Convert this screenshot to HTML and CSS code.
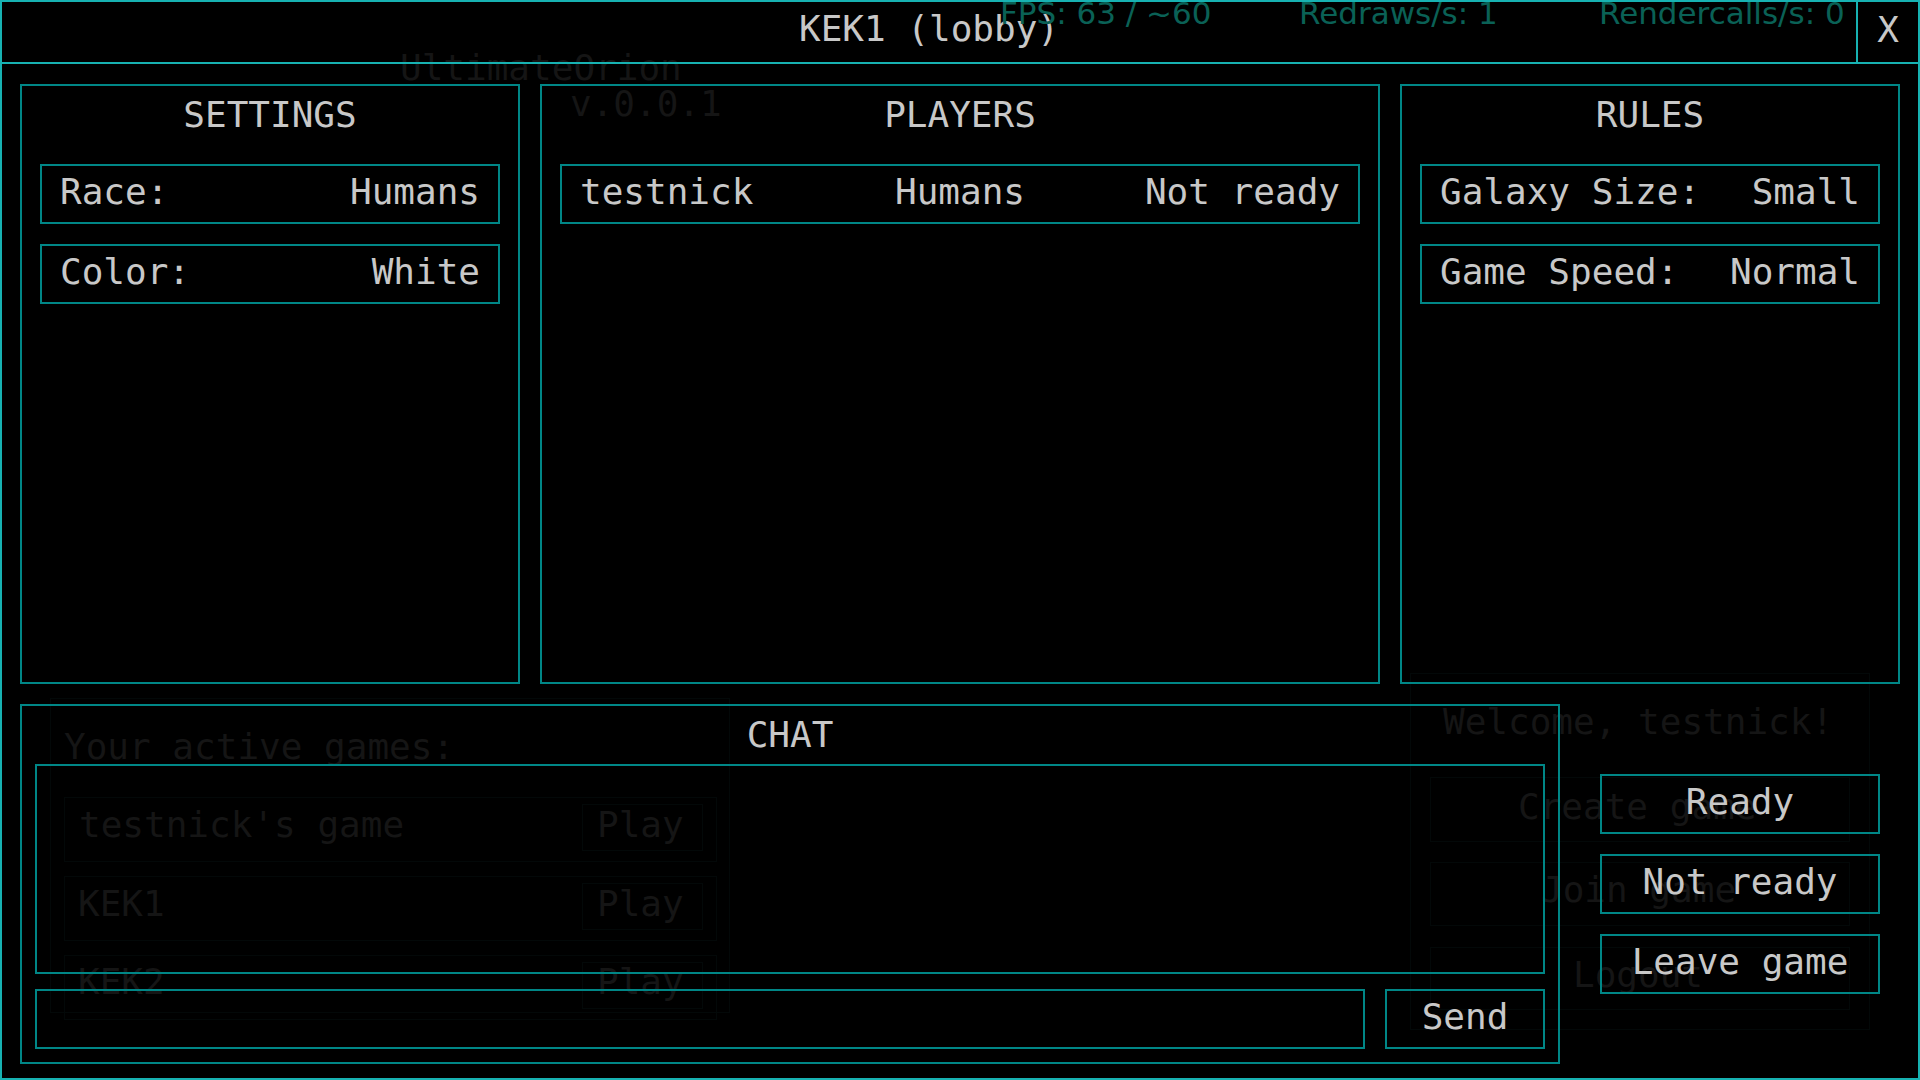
FILE: index.html
```html
<!DOCTYPE html>
<html>
<head>
<meta charset="utf-8">
<link rel="stylesheet" href="styles.css">
</head>
<body>
<div class="screen">
  <div class="ghost">
    <div class="gbox" style="left:50px;top:698px;width:680px;height:315px"></div>
    <div class="gbox" style="left:64px;top:797px;width:653px;height:65px"></div>
    <div class="gbox" style="left:64px;top:876px;width:653px;height:65px"></div>
    <div class="gbox" style="left:64px;top:955px;width:653px;height:65px"></div>
    <div class="gbox" style="left:582px;top:804px;width:121px;height:47px"></div>
    <div class="gbox" style="left:582px;top:883px;width:121px;height:47px"></div>
    <div class="gbox" style="left:582px;top:962px;width:121px;height:47px"></div>
    <div class="gbox" style="left:1410px;top:673px;width:460px;height:357px"></div>
    <div class="gbox" style="left:1430px;top:777px;width:420px;height:65px"></div>
    <div class="gbox" style="left:1430px;top:862px;width:420px;height:64px"></div>
    <div class="gbox" style="left:1430px;top:947px;width:420px;height:63px"></div>
    <span class="gtext" style="left:400px;top:50px">UltimateOrion</span>
    <span class="gtext" style="left:570px;top:86px">v.0.0.1</span>
    <span class="gtext" style="left:64px;top:729px">Your active games:</span>
    <span class="gtext" style="left:79px;top:807px">testnick's game</span>
    <span class="gtext" style="left:597px;top:807px">Play</span>
    <span class="gtext" style="left:78px;top:886px">KEK1</span>
    <span class="gtext" style="left:597px;top:886px">Play</span>
    <span class="gtext" style="left:78px;top:964px">KEK2</span>
    <span class="gtext" style="left:597px;top:964px">Play</span>
    <span class="gtext" style="left:1443px;top:704px">Welcome, testnick!</span>
    <span class="gtext" style="left:1518px;top:789px">Create game</span>
    <span class="gtext" style="left:1541px;top:872px">Join game</span>
    <span class="gtext" style="left:1573px;top:957px">Logout</span>
  </div>

  <header class="header">
    <div class="title">KEK1 (lobby)</div>
    <div class="close">X</div>
  </header>

  <div class="stats">
    <span class="stat s1">FPS: 63 / ~60</span>
    <span class="stat s2">Redraws/s: 1</span>
    <span class="stat s3">Rendercalls/s: 0</span>
  </div>

  <main class="main">
    <section class="top">
      <div class="panel">
        <div class="heading">SETTINGS</div>
        <div class="row"><span>Race:</span><span>Humans</span></div>
        <div class="row"><span>Color:</span><span>White</span></div>
      </div>
      <div class="panel">
        <div class="heading">PLAYERS</div>
        <div class="row row3"><span>testnick</span><span>Humans</span><span>Not ready</span></div>
      </div>
      <div class="panel">
        <div class="heading">RULES</div>
        <div class="row"><span>Galaxy Size:</span><span>Small</span></div>
        <div class="row"><span>Game Speed:</span><span>Normal</span></div>
      </div>
    </section>
    <section class="bottom">
      <div class="chat">
        <div class="chat-heading">CHAT</div>
        <div class="chat-log"></div>
        <div class="chat-input-row">
          <div class="chat-input"></div>
          <div class="btn send">Send</div>
        </div>
      </div>
      <div class="actions">
        <div class="btn action">Ready</div>
        <div class="btn action">Not ready</div>
        <div class="btn action">Leave game</div>
      </div>
    </section>
  </main>
</div>
</body>
</html>
```

FILE: styles.css
```css
html, body {
  margin: 0;
  padding: 0;
  background: #000;
}

body {
  font-family: "DejaVu Sans Mono", "Liberation Mono", monospace;
  font-size: 36px;
  color: #c8c8c8;
}

.screen {
  position: relative;
  width: 1920px;
  height: 1080px;
  box-sizing: border-box;
  border: 2px solid #17b2b2;
  display: flex;
  flex-direction: column;
  overflow: hidden;
}

/* faint background menu */
.ghost {
  position: absolute;
  left: -2px;
  top: -2px;
  width: 1920px;
  height: 1080px;
  z-index: 0;
  pointer-events: none;
}

.gtext {
  position: absolute;
  line-height: 36px;
  white-space: pre;
  color: #151515;
}

.gbox {
  position: absolute;
  box-sizing: border-box;
  border: 1px solid #030808;
}

.header {
  position: relative;
  z-index: 1;
  height: 62px;
  box-sizing: border-box;
  border-bottom: 2px solid #17b2b2;
  display: flex;
}

.title {
  flex: 1;
  display: flex;
  align-items: center;
  justify-content: center;
  line-height: 36px;
  padding-bottom: 7px;
}

.close {
  width: 62px;
  box-sizing: border-box;
  border-left: 2px solid #17b2b2;
  display: flex;
  align-items: center;
  justify-content: center;
  padding-bottom: 6px;
}

.stats {
  position: absolute;
  left: 0;
  top: -4px;
  z-index: 2;
  font-family: "DejaVu Sans", "Liberation Sans", sans-serif;
  font-size: 31px;
  line-height: 31px;
  color: #0a6156;
}

.stat {
  position: absolute;
  white-space: pre;
}

.s1 { left: 998px; }
.s2 { left: 1297px; }
.s3 { left: 1597px; }

.main {
  position: relative;
  z-index: 1;
  flex: 1;
  padding: 20px 18px 14px 18px;
  display: flex;
  flex-direction: column;
  gap: 20px;
}

.top {
  display: grid;
  grid-template-columns: 500px 840px 500px;
  gap: 20px;
  height: 600px;
}

.panel {
  box-sizing: border-box;
  border: 2px solid #008686;
  padding: 0 18px;
  display: flex;
  flex-direction: column;
  gap: 20px;
}

.heading {
  height: 58px;
  margin-bottom: -20px;
  display: flex;
  align-items: center;
  justify-content: center;
  line-height: 36px;
}

.heading + .row {
  margin-top: 20px;
}

.row {
  height: 60px;
  box-sizing: border-box;
  border: 2px solid #008686;
  padding: 0 18px 5px 18px;
  display: flex;
  align-items: center;
  justify-content: space-between;
  line-height: 36px;
  white-space: pre;
}

.row3 {
  display: grid;
  grid-template-columns: 1fr auto 1fr;
}

.row3 span:nth-child(1) { justify-self: start; }
.row3 span:nth-child(2) { justify-self: center; }
.row3 span:nth-child(3) { justify-self: end; }

.bottom {
  display: flex;
  gap: 20px;
  height: 360px;
}

.chat {
  width: 1540px;
  box-sizing: border-box;
  border: 2px solid #008686;
  padding: 0 13px 13px 13px;
  display: flex;
  flex-direction: column;
}

.chat-heading {
  height: 58px;
  display: flex;
  align-items: center;
  justify-content: center;
  line-height: 36px;
}

.chat-log {
  height: 210px;
  box-sizing: border-box;
  border: 2px solid #008686;
}

.chat-input-row {
  margin-top: 15px;
  height: 60px;
  display: flex;
  gap: 20px;
}

.chat-input {
  flex: 1;
  box-sizing: border-box;
  border: 2px solid #008686;
}

.btn {
  box-sizing: border-box;
  border: 2px solid #008686;
  display: flex;
  align-items: center;
  justify-content: center;
  line-height: 36px;
  white-space: pre;
  padding-bottom: 5px;
}

.send {
  width: 160px;
}

.actions {
  width: 320px;
  display: flex;
  flex-direction: column;
  align-items: center;
  justify-content: center;
  gap: 20px;
}

.action {
  width: 280px;
  height: 60px;
}
```
